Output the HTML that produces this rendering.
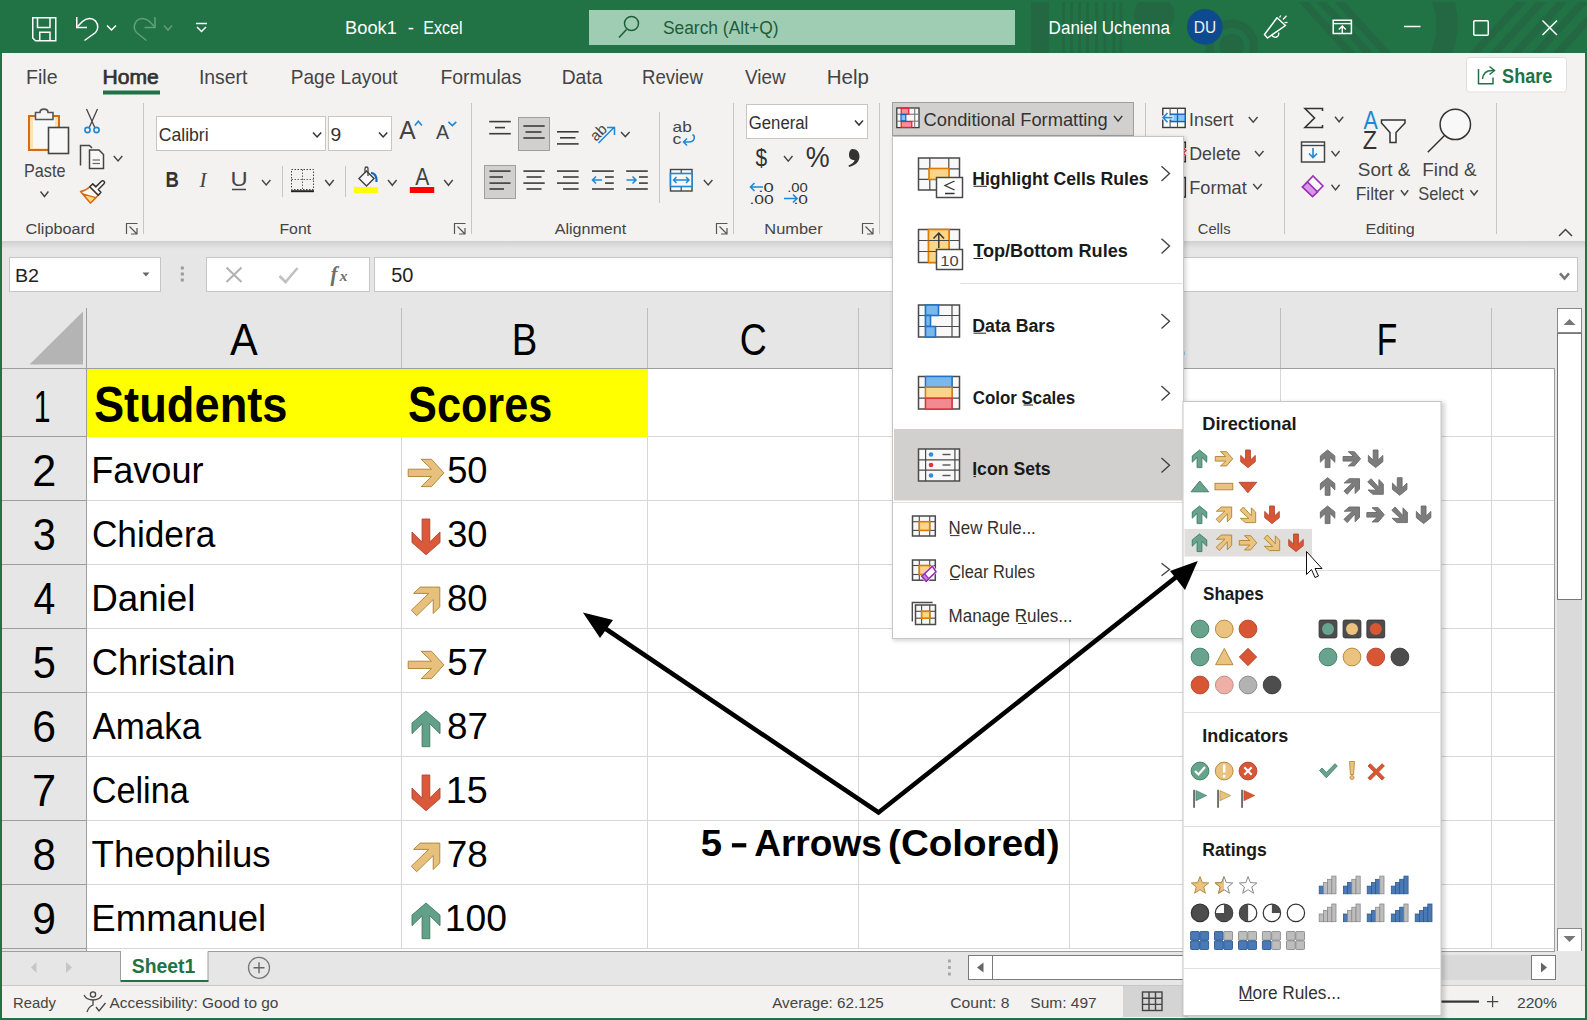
<!DOCTYPE html>
<html><head><meta charset="utf-8"><style>
html,body{margin:0;padding:0;width:1587px;height:1020px;overflow:hidden;background:#217346;}
svg{display:block;font-family:"Liberation Sans",sans-serif;}
</style></head><body>
<svg width="1587" height="1020" viewBox="0 0 1587 1020">
<rect x="0" y="0" width="1587" height="1020" fill="#217346" />
<g fill="#246843" stroke="none">
<rect x="1031" y="2" width="18" height="51"/>
<rect x="1062" y="2" width="2.8" height="51"/>
<rect x="1070" y="2" width="2.8" height="51"/>
<rect x="1078" y="2" width="2.8" height="51"/>
<rect x="1086" y="2" width="2.8" height="51"/>
<rect x="1095" y="2" width="2.8" height="51"/>
<rect x="1103.5" y="2" width="2.8" height="51"/>
<rect x="1112.5" y="2" width="2.8" height="51"/>
<rect x="1119.5" y="2" width="2.8" height="51"/>
<circle cx="1154.1" cy="15" r="20.3"/>
<circle cx="1231.7" cy="46" r="12.3"/>
</g>
<circle cx="1231.7" cy="46" r="22.3" fill="none" stroke="#246843" stroke-width="8.5"/>
<g stroke="#246843" stroke-width="7.5" fill="none">
<line x1="1300" y1="-2" x2="1352" y2="55"/>
<line x1="1318" y1="-2" x2="1370" y2="55"/>
<line x1="1336" y1="-2" x2="1388" y2="55"/>
<line x1="1473" y1="55" x2="1525" y2="-2"/>
<line x1="1493" y1="55" x2="1545" y2="-2"/>
<line x1="1514" y1="55" x2="1566" y2="-2"/>
<line x1="1535" y1="55" x2="1587" y2="-2"/>
<line x1="1556" y1="55" x2="1608" y2="-2"/>
</g>
<path d="M1432 2 C1438 18 1438 38 1430 53 H1452 C1459 38 1459 18 1455 2 Z" fill="#246843"/>
<rect x="0" y="0" width="1587" height="2" fill="#217346" />
<path d="M32.75 17.75 H55.75 V40.75 H35.5 L32.75 38 Z" fill="none" stroke="#ffffff" stroke-width="1.5" />
<path d="M37.5 17.75 V27.5 H50 V17.75" fill="none" stroke="#ffffff" stroke-width="1.5" />
<path d="M39.75 40.75 V32.25 H50 V40.75" fill="none" stroke="#ffffff" stroke-width="1.5" />
<path d="M76.75 17 V27.5 H87" fill="none" stroke="#ffffff" stroke-width="1.5" />
<path d="M77.5 26.5 L82.5 21.5 C86.5 17.5 92.5 17.5 95.5 21 C98.5 24.5 98.5 29.5 95.5 32.5 L84.5 40.5" fill="none" stroke="#ffffff" stroke-width="1.5" />
<path d="M107 25.5 L111.5 30 L116 25.5" fill="none" stroke="#ffffff" stroke-width="1.5" />
<path d="M155 17 V27.5 H144.5" fill="none" stroke="#62a07c" stroke-width="1.5" />
<path d="M154.5 26.5 L149.5 21.5 C145.5 17.5 139.5 17.5 136.5 21 C133.5 24.5 133.5 29.5 136.5 32.5 L146.5 40.5" fill="none" stroke="#62a07c" stroke-width="1.5" />
<path d="M164 25.5 L168.0 30 L172 25.5" fill="none" stroke="#62a07c" stroke-width="1.5" />
<line x1="196" y1="23.5" x2="207" y2="23.5" stroke="#ffffff" stroke-width="1.5" />
<path d="M197 27 L201.5 31.5 L206 27" fill="none" stroke="#ffffff" stroke-width="1.5" />
<text transform="translate(345.10,33.90) scale(0.9820,1)" font-size="18.60" font-weight="normal" fill="#ffffff" >Book1</text>
<text transform="translate(407.68,33.90) scale(0.9910,1)" font-size="18.60" font-weight="normal" fill="#ffffff" >-</text>
<text transform="translate(423.18,33.90) scale(0.8639,1)" font-size="18.60" font-weight="normal" fill="#ffffff" >Excel</text>
<rect x="589" y="10" width="426" height="35" fill="#9fcdb3" />
<circle cx="631.5" cy="23.5" r="7" fill="none" stroke="#1e5c3a" stroke-width="1.5"/>
<line x1="619" y1="37.5" x2="626.5" y2="29.5" stroke="#1e5c3a" stroke-width="1.5" />
<text transform="translate(662.91,33.90) scale(0.9364,1)" font-size="18.60" font-weight="normal" fill="#1e5c3a" >Search (Alt+Q)</text>
<text transform="translate(1048.60,33.90) scale(0.9172,1)" font-size="18.60" font-weight="normal" fill="#ffffff" >Daniel Uchenna</text>
<circle cx="1204.8" cy="26.8" r="17.9" fill="#0e4b8e"/>
<text transform="translate(1193.83,33.00) scale(0.9678,1)" font-size="16.00" font-weight="normal" fill="#f0f0f0" >DU</text>
<path d="M1264.5 34.5 L1277 17.8 L1285.5 25.5 L1267.5 38 Z" fill="none" stroke="#ffffff" stroke-width="1.5" stroke-linejoin="round"/>
<path d="M1272 35 A3.3 3.3 0 0 0 1278.5 32.5" fill="none" stroke="#ffffff" stroke-width="1.4" />
<line x1="1279.5" y1="17.5" x2="1280.8" y2="15.5" stroke="#ffffff" stroke-width="1.3" />
<line x1="1283" y1="19.5" x2="1286.5" y2="15.8" stroke="#ffffff" stroke-width="1.3" />
<line x1="1284.5" y1="22.5" x2="1287.5" y2="22.5" stroke="#ffffff" stroke-width="1.3" />
<path d="M1333.2 20.2 H1351.4 V33.6 H1333.2 Z" fill="none" stroke="#ffffff" stroke-width="1.5" />
<line x1="1333.2" y1="23.6" x2="1351.4" y2="23.6" stroke="#ffffff" stroke-width="1.4" />
<path d="M1338.8 29.5 L1342.3 26 L1345.8 29.5 M1342.3 26.5 V33.6" fill="none" stroke="#ffffff" stroke-width="1.4" />
<line x1="1404" y1="26.5" x2="1420.5" y2="26.5" stroke="#ffffff" stroke-width="1.5" />
<rect x="1473.75" y="20.75" width="14.5" height="14.5" fill="none" stroke="#fff" stroke-width="1.5" rx="1"/>
<line x1="1542.5" y1="20.5" x2="1557" y2="35" stroke="#ffffff" stroke-width="1.5" />
<line x1="1557" y1="20.5" x2="1542.5" y2="35" stroke="#ffffff" stroke-width="1.5" />
<rect x="2" y="53" width="1583" height="188" fill="#f3f2f1" />
<text transform="translate(26.10,84.00) scale(0.9527,1)" font-size="20.50" font-weight="normal" fill="#444444" >File</text>
<text transform="translate(102.57,84.00) scale(1.0290,1)" font-size="20.50" font-weight="normal" fill="#323130" stroke="#323130" stroke-width="0.7">Home</text>
<rect x="103" y="90.5" width="57" height="4" fill="#217346" />
<text transform="translate(198.91,84.00) scale(0.9466,1)" font-size="20.50" font-weight="normal" fill="#444444" >Insert</text>
<text transform="translate(290.84,84.00) scale(0.9286,1)" font-size="20.50" font-weight="normal" fill="#444444" >Page Layout</text>
<text transform="translate(440.41,84.00) scale(0.9481,1)" font-size="20.50" font-weight="normal" fill="#444444" >Formulas</text>
<text transform="translate(561.72,84.00) scale(0.9394,1)" font-size="20.50" font-weight="normal" fill="#444444" >Data</text>
<text transform="translate(641.98,84.00) scale(0.9057,1)" font-size="20.50" font-weight="normal" fill="#444444" >Review</text>
<text transform="translate(745.12,84.00) scale(0.9191,1)" font-size="20.50" font-weight="normal" fill="#444444" >View</text>
<text transform="translate(826.71,84.00) scale(1.0021,1)" font-size="20.50" font-weight="normal" fill="#444444" >Help</text>
<rect x="1466.5" y="57.5" width="100" height="34.5" fill="#ffffff" stroke="#e1dfdd" stroke-width="1" rx="3"/>
<path d="M1478.5 69 V83.8 H1493 V77.5" fill="none" stroke="#217346" stroke-width="1.5" />
<path d="M1482.5 79 C1483 73.5 1486 70.5 1492 70.5 H1494" fill="none" stroke="#217346" stroke-width="1.5" />
<path d="M1489.5 66.5 L1494.5 70.5 L1489.5 74.5" fill="none" stroke="#217346" stroke-width="1.5" />
<text transform="translate(1502.08,82.80) scale(0.9038,1)" font-size="20.00" font-weight="bold" fill="#217346" >Share</text>
<line x1="143.5" y1="103" x2="143.5" y2="234" stroke="#c8c6c4" stroke-width="1" />
<line x1="471.5" y1="103" x2="471.5" y2="234" stroke="#c8c6c4" stroke-width="1" />
<line x1="733.5" y1="103" x2="733.5" y2="234" stroke="#c8c6c4" stroke-width="1" />
<line x1="879.5" y1="103" x2="879.5" y2="234" stroke="#c8c6c4" stroke-width="1" />
<line x1="1145.5" y1="103" x2="1145.5" y2="234" stroke="#c8c6c4" stroke-width="1" />
<line x1="1284.5" y1="103" x2="1284.5" y2="234" stroke="#c8c6c4" stroke-width="1" />
<line x1="1496.5" y1="103" x2="1496.5" y2="234" stroke="#c8c6c4" stroke-width="1" />
<text transform="translate(25.48,234.20) scale(1.0820,1)" font-size="15.00" font-weight="normal" fill="#444444" >Clipboard</text>
<text transform="translate(279.40,234.20) scale(1.0567,1)" font-size="15.00" font-weight="normal" fill="#444444" >Font</text>
<text transform="translate(554.67,234.20) scale(1.0742,1)" font-size="15.00" font-weight="normal" fill="#444444" >Alignment</text>
<text transform="translate(764.35,234.20) scale(1.0931,1)" font-size="15.00" font-weight="normal" fill="#444444" >Number</text>
<text transform="translate(1197.75,234.20) scale(0.9833,1)" font-size="15.00" font-weight="normal" fill="#444444" >Cells</text>
<text transform="translate(1365.48,234.20) scale(1.0763,1)" font-size="15.00" font-weight="normal" fill="#444444" >Editing</text>
<path d="M126.5 234 V223.5 H137.5" fill="none" stroke="#555" stroke-width="1.2" />
<path d="M129.5 226.5 L137 234 M137 228 V234 H131" fill="none" stroke="#555" stroke-width="1.2" />
<path d="M454.5 234 V223.5 H465.5" fill="none" stroke="#555" stroke-width="1.2" />
<path d="M457.5 226.5 L465 234 M465 228 V234 H459" fill="none" stroke="#555" stroke-width="1.2" />
<path d="M716.5 234 V223.5 H727.5" fill="none" stroke="#555" stroke-width="1.2" />
<path d="M719.5 226.5 L727 234 M727 228 V234 H721" fill="none" stroke="#555" stroke-width="1.2" />
<path d="M862.5 234 V223.5 H873.5" fill="none" stroke="#555" stroke-width="1.2" />
<path d="M865.5 226.5 L873 234 M873 228 V234 H867" fill="none" stroke="#555" stroke-width="1.2" />
<path d="M1559 236 L1565.5 229.5 L1572 236" fill="none" stroke="#444" stroke-width="1.5" />
<defs><linearGradient id="rsh" x1="0" y1="0" x2="0" y2="1"><stop offset="0" stop-color="#cfcfcf"/><stop offset="1" stop-color="#e6e6e6"/></linearGradient></defs>
<rect x="2" y="241" width="1583" height="8" fill="url(#rsh)" />
<rect x="29" y="116" width="30" height="34" fill="#fbe4b1" stroke="#d86b10" stroke-width="2"/>
<rect x="33" y="118" width="22" height="30" fill="#f8f8f8" />
<path d="M35.5 119.5 V112.5 H40 C40 108 48 108 48 112.5 H53 V119.5 Z" fill="#f5f5f5" stroke="#555" stroke-width="1.6" />
<rect x="48.5" y="127.5" width="20" height="26" fill="#f8f8f8" stroke="#444" stroke-width="1.6"/>
<text transform="translate(23.97,176.80) scale(0.9263,1)" font-size="17.50" font-weight="normal" fill="#444444" >Paste</text>
<path d="M40.5 191.5 L44.45 196.5 L48.4 191.5" fill="none" stroke="#444" stroke-width="1.4" />
<path d="M86.5 109 L95 128 M97.5 109 L89 128" fill="none" stroke="#444" stroke-width="1.3" />
<circle cx="87.5" cy="130" r="2.6" fill="none" stroke="#1e88d6" stroke-width="1.6"/>
<circle cx="96.5" cy="130" r="2.6" fill="none" stroke="#1e88d6" stroke-width="1.6"/>
<path d="M80.5 165.5 V145.5 H89.5 L92 148" fill="none" stroke="#444" stroke-width="1.5" />
<path d="M89.5 168.5 V150 H99 L103.5 154.5 V168.5 Z" fill="#f8f8f8" stroke="#444" stroke-width="1.5" />
<line x1="92.5" y1="160" x2="100" y2="160" stroke="#666" stroke-width="1.2" />
<line x1="92.5" y1="163.5" x2="100" y2="163.5" stroke="#666" stroke-width="1.2" />
<path d="M113.8 156 L118.05 161 L122.3 156" fill="none" stroke="#444" stroke-width="1.4" />
<path d="M98.3 195.2 L89.8 186.7 C87 189.5 84 191 80.6 191.5 L90.5 202.9 Z" fill="#fafafa" stroke="#d86b10" stroke-width="1.6" stroke-linejoin="round"/>
<path d="M82.6 193.8 L95.7 197.7 L90.5 202.9 Z" fill="#f9d98a" stroke="#d86b10" stroke-width="1.3" stroke-linejoin="round"/>
<path d="M89.8 186.7 L92.8 183.9 L95.8 186.9 L101.4 181.3 C102.2 180.5 103.2 180.5 104 181.3 C104.8 182.1 104.8 183 104 183.8 L98.3 189.5 L100.9 192.2 L98.3 195.2 Z" fill="#fafafa" stroke="#333" stroke-width="1.5" stroke-linejoin="round"/>
<rect x="156.5" y="116.5" width="169" height="34" fill="#fff" stroke="#c8c6c4" stroke-width="1"/>
<text transform="translate(158.70,141.20) scale(0.9482,1)" font-size="18.60" font-weight="normal" fill="#323130" >Calibri</text>
<path d="M313 132.5 L317.1 137 L321.2 132.5" fill="none" stroke="#333" stroke-width="1.5" />
<rect x="328.5" y="116.5" width="63" height="34" fill="#fff" stroke="#c8c6c4" stroke-width="1"/>
<text transform="translate(330.60,141.20) scale(1.0359,1)" font-size="18.60" font-weight="normal" fill="#323130" >9</text>
<path d="M379 132.5 L383.15 137 L387.3 132.5" fill="none" stroke="#333" stroke-width="1.5" />
<text transform="translate(399.35,139.00) scale(0.9207,1)" font-size="26.70" font-weight="normal" fill="#444" >A</text>
<path d="M414.8 125.6 L418.35 121.3 L421.9 125.6" fill="none" stroke="#1e88d6" stroke-width="1.6" />
<text transform="translate(435.96,139.00) scale(0.9658,1)" font-size="20.30" font-weight="normal" fill="#444" >A</text>
<path d="M448.4 121.8 L452.35 125.6 L456.3 121.8" fill="none" stroke="#1e88d6" stroke-width="1.6" />
<text transform="translate(165.46,186.60) scale(0.8539,1)" font-size="21.70" font-weight="bold" fill="#333" >B</text>
<text transform="translate(199.5,186.6)" font-size="21" font-style="italic" fill="#444" font-family="Liberation Serif">I</text>
<text transform="translate(230.47,186.00) scale(1.1597,1)" font-size="20.50" font-weight="normal" fill="#444" >U</text>
<line x1="232" y1="189.5" x2="246" y2="189.5" stroke="#444" stroke-width="1.5" />
<path d="M262 180 L266.2 185 L270.4 180" fill="none" stroke="#444" stroke-width="1.4" />
<line x1="282.5" y1="166" x2="282.5" y2="197" stroke="#c8c6c4" stroke-width="1" />
<rect x="291.5" y="169.5" width="22" height="20" fill="none" stroke="#444" stroke-width="1" stroke-dasharray="1.5 1.5"/>
<path d="M302.5 169.5 V189.5 M291.5 179.5 H313.5" fill="none" stroke="#666" stroke-width="1" stroke-dasharray="1.5 1.5"/>
<line x1="291" y1="191.2" x2="314" y2="191.2" stroke="#222" stroke-width="2" />
<path d="M325.2 180 L329.45 185.3 L333.7 180" fill="none" stroke="#444" stroke-width="1.4" />
<line x1="345.5" y1="166" x2="345.5" y2="197" stroke="#c8c6c4" stroke-width="1" />
<path d="M359 178.5 L366.5 171 L374 178.5 L366.5 186 Z" fill="#f8f8f8" stroke="#444" stroke-width="1.5" />
<path d="M365 173 V168.5 C365 166.5 368 166.5 368 168.5 V176" fill="none" stroke="#444" stroke-width="1.3" />
<path d="M371 173 C375 173 377 177 376.5 182" fill="none" stroke="#1565c0" stroke-width="2.2" />
<rect x="354" y="187" width="24" height="6" fill="#ffff00" />
<path d="M388 180 L392.3 185.3 L396.6 180" fill="none" stroke="#444" stroke-width="1.4" />
<text transform="translate(415.26,185.30) scale(0.9023,1)" font-size="23.40" font-weight="normal" fill="#444" >A</text>
<rect x="409.8" y="187" width="24.4" height="6" fill="#ff0000" />
<path d="M444.2 180 L448.45 185.3 L452.7 180" fill="none" stroke="#444" stroke-width="1.4" />
<line x1="489.2" y1="121.6" x2="510.8" y2="121.6" stroke="#3b3b3b" stroke-width="1.6" />
<line x1="495" y1="127.6" x2="505" y2="127.6" stroke="#3b3b3b" stroke-width="1.6" />
<line x1="489.2" y1="133.7" x2="510.8" y2="133.7" stroke="#3b3b3b" stroke-width="1.6" />
<rect x="518.5" y="117.5" width="31" height="33" fill="#d2d0ce" stroke="#a19f9d" stroke-width="1"/>
<line x1="523.4" y1="126" x2="544.7" y2="126" stroke="#3b3b3b" stroke-width="1.6" />
<line x1="525.5" y1="132" x2="541.5" y2="132" stroke="#3b3b3b" stroke-width="1.6" />
<line x1="523.4" y1="138" x2="544.7" y2="138" stroke="#3b3b3b" stroke-width="1.6" />
<line x1="557" y1="131.8" x2="578.6" y2="131.8" stroke="#3b3b3b" stroke-width="1.6" />
<line x1="560" y1="137.8" x2="575.5" y2="137.8" stroke="#3b3b3b" stroke-width="1.6" />
<line x1="557" y1="143.9" x2="578.6" y2="143.9" stroke="#3b3b3b" stroke-width="1.6" />
<text transform="translate(596,142) rotate(-45)" font-size="15" fill="#444">ab</text>
<path d="M598.5 143 L614.5 127 M607 127.5 H614.5 V135" fill="none" stroke="#1e88d6" stroke-width="1.5" />
<path d="M621 132 L625.3 136.6 L629.6 132" fill="none" stroke="#444" stroke-width="1.4" />
<line x1="659.5" y1="112" x2="659.5" y2="203" stroke="#c8c6c4" stroke-width="1" />
<text transform="translate(672.57,131.50) scale(1.2301,1)" font-size="14.00" font-weight="normal" fill="#444" >ab</text>
<text transform="translate(672.54,144.00) scale(1.2757,1)" font-size="14.00" font-weight="normal" fill="#444" >c</text>
<path d="M692.5 134.5 C695.5 136 695 142 689 142 H683.5 M687 138.5 L683.5 142 L687 145.5" fill="none" stroke="#1e88d6" stroke-width="1.5" />
<rect x="484.5" y="165.5" width="31" height="33" fill="#d2d0ce" stroke="#a19f9d" stroke-width="1"/>
<line x1="489.5" y1="171.1" x2="510.5" y2="171.1" stroke="#3b3b3b" stroke-width="1.6" />
<line x1="489.5" y1="177" x2="503" y2="177" stroke="#3b3b3b" stroke-width="1.6" />
<line x1="489.5" y1="183.1" x2="510.5" y2="183.1" stroke="#3b3b3b" stroke-width="1.6" />
<line x1="489.5" y1="189" x2="504" y2="189" stroke="#3b3b3b" stroke-width="1.6" />
<line x1="523.4" y1="171.1" x2="544.7" y2="171.1" stroke="#3b3b3b" stroke-width="1.6" />
<line x1="526.5" y1="177" x2="541.5" y2="177" stroke="#3b3b3b" stroke-width="1.6" />
<line x1="523.4" y1="183.1" x2="544.7" y2="183.1" stroke="#3b3b3b" stroke-width="1.6" />
<line x1="526.5" y1="189" x2="541.5" y2="189" stroke="#3b3b3b" stroke-width="1.6" />
<line x1="557" y1="171.1" x2="578.6" y2="171.1" stroke="#3b3b3b" stroke-width="1.6" />
<line x1="563" y1="177" x2="578.6" y2="177" stroke="#3b3b3b" stroke-width="1.6" />
<line x1="557" y1="183.1" x2="578.6" y2="183.1" stroke="#3b3b3b" stroke-width="1.6" />
<line x1="563" y1="189" x2="578.6" y2="189" stroke="#3b3b3b" stroke-width="1.6" />
<line x1="592" y1="171.1" x2="613.8" y2="171.1" stroke="#3b3b3b" stroke-width="1.6" />
<line x1="605" y1="177" x2="613.8" y2="177" stroke="#3b3b3b" stroke-width="1.6" />
<line x1="605" y1="183.1" x2="613.8" y2="183.1" stroke="#3b3b3b" stroke-width="1.6" />
<line x1="592" y1="189" x2="613.8" y2="189" stroke="#3b3b3b" stroke-width="1.6" />
<path d="M592.5 180 H602 M596 176.5 L592.5 180 L596 183.5" fill="none" stroke="#1e88d6" stroke-width="1.5" />
<line x1="626.2" y1="171.1" x2="647.8" y2="171.1" stroke="#3b3b3b" stroke-width="1.6" />
<line x1="639" y1="177" x2="647.8" y2="177" stroke="#3b3b3b" stroke-width="1.6" />
<line x1="639" y1="183.1" x2="647.8" y2="183.1" stroke="#3b3b3b" stroke-width="1.6" />
<line x1="626.2" y1="189" x2="647.8" y2="189" stroke="#3b3b3b" stroke-width="1.6" />
<path d="M626.5 180 H636 M632.5 176.5 L636 180 L632.5 183.5" fill="none" stroke="#1e88d6" stroke-width="1.5" />
<rect x="670.5" y="169.5" width="21.5" height="21.5" fill="#f8f8f8" stroke="#444" stroke-width="1.4"/>
<line x1="681.2" y1="169.5" x2="681.2" y2="191" stroke="#444" stroke-width="1.2" />
<rect x="670.5" y="173.5" width="21.5" height="13" fill="#f8f8f8" stroke="#1e88d6" stroke-width="1.6"/>
<path d="M673.5 180 H689 M676.5 177 L673.5 180 L676.5 183 M686 177 L689 180 L686 183" fill="none" stroke="#1e88d6" stroke-width="1.5" />
<path d="M703.9 180 L708.15 185 L712.4 180" fill="none" stroke="#444" stroke-width="1.4" />
<rect x="746.5" y="104.5" width="121" height="34" fill="#fff" stroke="#c8c6c4" stroke-width="1"/>
<text transform="translate(748.76,128.80) scale(0.9001,1)" font-size="18.60" font-weight="normal" fill="#323130" >General</text>
<path d="M855 120.5 L859.0 125 L863 120.5" fill="none" stroke="#333" stroke-width="1.5" />
<text transform="translate(755.47,165.50) scale(0.8738,1)" font-size="24.00" font-weight="normal" fill="#333" >$</text>
<path d="M784 156 L788.25 161.2 L792.5 156" fill="none" stroke="#444" stroke-width="1.4" />
<text transform="translate(805.84,167.40) scale(0.9276,1)" font-size="29.00" font-weight="normal" fill="#333" >%</text>
<path d="M852.5 149 C857 149 859.5 152 859.5 156.5 C859.5 161 856 165.5 849 167 L848.5 165.5 C852 164 854.5 162 854.5 160 C851 160 849 158 849 155 C849 151 851 149 852.5 149 Z" fill="#333" stroke="none" stroke-width="1" />
<text transform="translate(758.31,191.50) scale(1.4212,1)" font-size="13.00" font-weight="normal" fill="#333" >.0</text>
<text transform="translate(749.41,203.50) scale(1.3434,1)" font-size="13.00" font-weight="normal" fill="#333" >.00</text>
<path d="M750.5 187 H763 M754.5 183 L750.5 187 L754.5 191" fill="none" stroke="#1e88d6" stroke-width="1.6" />
<text transform="translate(787.14,191.50) scale(1.1418,1)" font-size="13.00" font-weight="normal" fill="#333" >.00</text>
<text transform="translate(793.42,203.50) scale(1.3338,1)" font-size="13.00" font-weight="normal" fill="#333" >.0</text>
<path d="M784 198.5 H797 M793 194.5 L797 198.5 L793 202.5" fill="none" stroke="#1e88d6" stroke-width="1.6" />
<rect x="892.5" y="102.5" width="241" height="33" fill="#d2d0ce" stroke="#a19f9d" stroke-width="1"/>
<rect x="896.8" y="108" width="22.2" height="19.6" fill="#fafafa" stroke="#3a3a3a" stroke-width="1.3"/>
<line x1="914.7" y1="108" x2="914.7" y2="127.6" stroke="#777" stroke-width="1.1" />
<line x1="896.8" y1="114.2" x2="919" y2="114.2" stroke="#777" stroke-width="1.1" />
<line x1="896.8" y1="121.2" x2="919" y2="121.2" stroke="#777" stroke-width="1.1" />
<rect x="901.2" y="108.3" width="7.6" height="5.8" fill="#ff909a" stroke="#e5202a" stroke-width="1.2"/>
<rect x="901" y="114.6" width="4.8" height="6.2" fill="#8cc4f0" stroke="#0a66c0" stroke-width="1.2"/>
<rect x="901.2" y="121.6" width="10.6" height="5.8" fill="#ff909a" stroke="#e5202a" stroke-width="1.2"/>
<text transform="translate(923.57,125.90) scale(0.9688,1)" font-size="18.90" font-weight="normal" fill="#333" >Conditional Formatting</text>
<path d="M1114 115.8 L1118.1 121.2 L1122.2 115.8" fill="none" stroke="#333" stroke-width="1.4" />
<rect x="1162.8" y="108.3" width="22.4" height="19.2" fill="#fafafa" stroke="#3a3a3a" stroke-width="1.4"/>
<line x1="1170.1" y1="108.3" x2="1170.1" y2="127.5" stroke="#555" stroke-width="1.1" />
<line x1="1177.5" y1="108.3" x2="1177.5" y2="127.5" stroke="#555" stroke-width="1.1" />
<rect x="1170.6" y="114.2" width="14.6" height="7.4" fill="#8cc4f0" stroke="#0a66c0" stroke-width="1.4"/>
<line x1="1177.5" y1="114.2" x2="1177.5" y2="121.6" stroke="#0a66c0" stroke-width="1.3" />
<path d="M1161 117.6 L1168 111.5 V124 Z" fill="#f3f2f1" stroke="none" stroke-width="1" />
<rect x="1162" y="115.5" width="11.5" height="4" fill="#fafafa" />
<path d="M1172.5 117.6 H1163 M1167.5 113 L1163 117.6 L1167.5 122.2" fill="none" stroke="#1e8ad6" stroke-width="1.6" />
<text transform="translate(1189.06,125.90) scale(0.9717,1)" font-size="18.30" font-weight="normal" fill="#444" >Insert</text>
<path d="M1248.8 117 L1253.1999999999998 122.2 L1257.6 117" fill="none" stroke="#444" stroke-width="1.4" />
<path d="M1183 142.2 H1185.3 V148 M1185.3 156 V161.8 H1183" fill="none" stroke="#333" stroke-width="1.5" />
<path d="M1183.5 148 L1186 150.5 L1183.5 153 M1183.5 153.5 L1186 156" fill="none" stroke="#e5303c" stroke-width="1.3" />
<path d="M1183 177.5 H1185.3 V197 H1183" fill="none" stroke="#333" stroke-width="1.5" />
<text transform="translate(1189.24,159.70) scale(0.9746,1)" font-size="18.30" font-weight="normal" fill="#444" >Delete</text>
<path d="M1255 151 L1259.25 156 L1263.5 151" fill="none" stroke="#444" stroke-width="1.4" />
<text transform="translate(1189.21,193.80) scale(0.9925,1)" font-size="18.30" font-weight="normal" fill="#444" >Format</text>
<path d="M1253.2 184 L1257.5 189 L1261.8 184" fill="none" stroke="#444" stroke-width="1.4" />
<path d="M1322.5 111 V108.5 H1305 L1314.5 118 L1305 127.5 H1322.5 V125" fill="none" stroke="#333" stroke-width="1.6" />
<path d="M1335 116.8 L1339.1 121.8 L1343.2 116.8" fill="none" stroke="#444" stroke-width="1.4" />
<rect x="1301.5" y="142" width="23" height="20" fill="#f8f8f8" stroke="#444" stroke-width="1.5"/>
<line x1="1301.5" y1="145.5" x2="1324.5" y2="145.5" stroke="#444" stroke-width="1.4" />
<path d="M1313 148 V157.5 M1309 153.5 L1313 157.5 L1317 153.5" fill="none" stroke="#1e88d6" stroke-width="1.6" />
<path d="M1331.5 151 L1335.55 156 L1339.6 151" fill="none" stroke="#444" stroke-width="1.4" />
<path d="M1302.5 187 L1313 176 L1323 186 L1312.5 196.5 Z" fill="#f8f8f8" stroke="#9b30b8" stroke-width="1.6" />
<path d="M1302.5 187 L1307.5 182 L1317.5 192 L1312.5 196.5 Z" fill="#d896e6" stroke="#9b30b8" stroke-width="1.6" />
<path d="M1331.5 184.7 L1335.55 189.9 L1339.6 184.7" fill="none" stroke="#444" stroke-width="1.4" />
<text transform="translate(1363.46,128.50) scale(0.8295,1)" font-size="26.00" font-weight="normal" fill="#1e88d6" >A</text>
<text transform="translate(1362.76,149.40) scale(0.9346,1)" font-size="25.00" font-weight="normal" fill="#333" >Z</text>
<path d="M1381.5 120 H1405 V123 L1396 132.5 V142.5 H1390 V132.5 L1381.5 123 Z" fill="#f8f8f8" stroke="#333" stroke-width="1.5" />
<text transform="translate(1357.84,175.60) scale(1.0625,1)" font-size="17.80" font-weight="normal" fill="#444" >Sort &amp;</text>
<text transform="translate(1355.78,199.70) scale(0.9736,1)" font-size="17.80" font-weight="normal" fill="#444" >Filter</text>
<path d="M1400.9 190.3 L1404.5500000000002 195 L1408.2 190.3" fill="none" stroke="#444" stroke-width="1.4" />
<circle cx="1455.3" cy="124.4" r="15.2" fill="#f8f8f8" stroke="#333" stroke-width="1.5"/>
<line x1="1444.5" y1="135.5" x2="1427.8" y2="152.2" stroke="#333" stroke-width="1.5" />
<text transform="translate(1422.26,175.60) scale(1.0562,1)" font-size="17.80" font-weight="normal" fill="#444" >Find &amp;</text>
<text transform="translate(1418.25,199.70) scale(0.9231,1)" font-size="17.80" font-weight="normal" fill="#444" >Select</text>
<path d="M1470.4 190.3 L1474.1 195 L1477.8 190.3" fill="none" stroke="#444" stroke-width="1.4" />
<rect x="2" y="249" width="1583" height="59" fill="#e6e6e6" />
<rect x="9.5" y="257.5" width="151" height="34" fill="#fff" stroke="#c6c6c6" stroke-width="1"/>
<text transform="translate(14.88,282.30) scale(1.1263,1)" font-size="17.50" font-weight="normal" fill="#222" >B2</text>
<path d="M142.5 272.5 H149.5 L146 276.5 Z" fill="#666" stroke="none" stroke-width="1" />
<rect x="180.8" y="266.5" width="3" height="3" fill="#9a9a9a" />
<rect x="180.8" y="272.5" width="3" height="3" fill="#9a9a9a" />
<rect x="180.8" y="278.5" width="3" height="3" fill="#9a9a9a" />
<rect x="206.5" y="257.5" width="163" height="34" fill="#fff" stroke="#c6c6c6" stroke-width="1"/>
<path d="M226.5 267.5 L241.5 282 M241.5 267.5 L226.5 282" fill="none" stroke="#b3b3b3" stroke-width="2.2" />
<path d="M279.5 276 L285.5 282 L297.5 268" fill="none" stroke="#c0c0c0" stroke-width="2.6" />
<text transform="translate(330.5,281)" font-size="21" font-style="italic" font-weight="bold" fill="#6e6e6e" font-family="Liberation Serif">f</text>
<text transform="translate(339.8,281)" font-size="15.5" font-style="italic" font-weight="bold" fill="#6e6e6e" font-family="Liberation Serif">x</text>
<rect x="374.5" y="257.5" width="1203" height="34" fill="#fff" stroke="#c6c6c6" stroke-width="1"/>
<text transform="translate(391.20,282.30) scale(0.9726,1)" font-size="20.50" font-weight="normal" fill="#222" >50</text>
<path d="M1560 273.3 L1564.5 278.5 L1569 273.3" fill="none" stroke="#777" stroke-width="2.6" />
<rect x="2" y="308" width="1553" height="60" fill="#e6e6e6" />
<path d="M29.5 364.5 L83 311.5 V364.5 Z" fill="#b4b4b4" stroke="none" stroke-width="1" />
<line x1="86.5" y1="308" x2="86.5" y2="368" stroke="#9e9e9e" stroke-width="1" />
<line x1="401.5" y1="308" x2="401.5" y2="368" stroke="#bdbdbd" stroke-width="1" />
<line x1="647.5" y1="308" x2="647.5" y2="368" stroke="#bdbdbd" stroke-width="1" />
<line x1="858.5" y1="308" x2="858.5" y2="368" stroke="#bdbdbd" stroke-width="1" />
<line x1="1069.5" y1="308" x2="1069.5" y2="368" stroke="#bdbdbd" stroke-width="1" />
<line x1="1280.5" y1="308" x2="1280.5" y2="368" stroke="#bdbdbd" stroke-width="1" />
<line x1="1491.5" y1="308" x2="1491.5" y2="368" stroke="#bdbdbd" stroke-width="1" />
<line x1="2" y1="368.5" x2="1554" y2="368.5" stroke="#9e9e9e" stroke-width="1" />
<text transform="translate(230.12,355.20) scale(0.9250,1)" font-size="45.00" font-weight="normal" fill="#000" >A</text>
<text transform="translate(511.86,355.20) scale(0.8518,1)" font-size="45.00" font-weight="normal" fill="#000" >B</text>
<text transform="translate(739.80,355.20) scale(0.8316,1)" font-size="45.00" font-weight="normal" fill="#000" >C</text>
<text transform="translate(949.68,355.20) scale(0.9005,1)" font-size="45.00" font-weight="normal" fill="#000" >D</text>
<text transform="translate(1160.97,355.20) scale(0.8200,1)" font-size="45.00" font-weight="normal" fill="#000" >E</text>
<text transform="translate(1376.85,355.20) scale(0.7456,1)" font-size="45.00" font-weight="normal" fill="#000" >F</text>
<rect x="87" y="369" width="1467" height="582" fill="#ffffff" />
<rect x="2" y="369" width="84.5" height="582" fill="#e6e6e6" />
<line x1="2" y1="436.5" x2="86.5" y2="436.5" stroke="#9e9e9e" stroke-width="1" />
<line x1="87" y1="436.5" x2="1554" y2="436.5" stroke="#d6d6d6" stroke-width="1" />
<line x1="2" y1="500.5" x2="86.5" y2="500.5" stroke="#9e9e9e" stroke-width="1" />
<line x1="87" y1="500.5" x2="1554" y2="500.5" stroke="#d6d6d6" stroke-width="1" />
<line x1="2" y1="564.5" x2="86.5" y2="564.5" stroke="#9e9e9e" stroke-width="1" />
<line x1="87" y1="564.5" x2="1554" y2="564.5" stroke="#d6d6d6" stroke-width="1" />
<line x1="2" y1="628.5" x2="86.5" y2="628.5" stroke="#9e9e9e" stroke-width="1" />
<line x1="87" y1="628.5" x2="1554" y2="628.5" stroke="#d6d6d6" stroke-width="1" />
<line x1="2" y1="692.5" x2="86.5" y2="692.5" stroke="#9e9e9e" stroke-width="1" />
<line x1="87" y1="692.5" x2="1554" y2="692.5" stroke="#d6d6d6" stroke-width="1" />
<line x1="2" y1="756.5" x2="86.5" y2="756.5" stroke="#9e9e9e" stroke-width="1" />
<line x1="87" y1="756.5" x2="1554" y2="756.5" stroke="#d6d6d6" stroke-width="1" />
<line x1="2" y1="820.5" x2="86.5" y2="820.5" stroke="#9e9e9e" stroke-width="1" />
<line x1="87" y1="820.5" x2="1554" y2="820.5" stroke="#d6d6d6" stroke-width="1" />
<line x1="2" y1="884.5" x2="86.5" y2="884.5" stroke="#9e9e9e" stroke-width="1" />
<line x1="87" y1="884.5" x2="1554" y2="884.5" stroke="#d6d6d6" stroke-width="1" />
<line x1="2" y1="948.5" x2="86.5" y2="948.5" stroke="#9e9e9e" stroke-width="1" />
<line x1="87" y1="948.5" x2="1554" y2="948.5" stroke="#d6d6d6" stroke-width="1" />
<line x1="401.5" y1="369" x2="401.5" y2="949" stroke="#d6d6d6" stroke-width="1" />
<line x1="647.5" y1="369" x2="647.5" y2="949" stroke="#d6d6d6" stroke-width="1" />
<line x1="858.5" y1="369" x2="858.5" y2="949" stroke="#d6d6d6" stroke-width="1" />
<line x1="1069.5" y1="369" x2="1069.5" y2="949" stroke="#d6d6d6" stroke-width="1" />
<line x1="1280.5" y1="369" x2="1280.5" y2="949" stroke="#d6d6d6" stroke-width="1" />
<line x1="1491.5" y1="369" x2="1491.5" y2="949" stroke="#d6d6d6" stroke-width="1" />
<line x1="86.5" y1="368" x2="86.5" y2="949" stroke="#9e9e9e" stroke-width="1" />
<rect x="87" y="369" width="561" height="68" fill="#ffff00" />
<line x1="1554.5" y1="368" x2="1554.5" y2="951" stroke="#9e9e9e" stroke-width="1" />
<text transform="translate(33.70,422.00) scale(0.6700,1)" font-size="45.00" font-weight="normal" fill="#000" >1</text>
<text transform="translate(32.13,486.00) scale(0.9610,1)" font-size="45.00" font-weight="normal" fill="#000" >2</text>
<text transform="translate(32.72,550.00) scale(0.9233,1)" font-size="45.00" font-weight="normal" fill="#000" >3</text>
<text transform="translate(33.40,614.00) scale(0.8688,1)" font-size="45.00" font-weight="normal" fill="#000" >4</text>
<text transform="translate(32.64,678.00) scale(0.9233,1)" font-size="45.00" font-weight="normal" fill="#000" >5</text>
<text transform="translate(32.13,742.00) scale(0.9488,1)" font-size="45.00" font-weight="normal" fill="#000" >6</text>
<text transform="translate(32.08,806.00) scale(0.9630,1)" font-size="45.00" font-weight="normal" fill="#000" >7</text>
<text transform="translate(32.48,870.00) scale(0.9330,1)" font-size="45.00" font-weight="normal" fill="#000" >8</text>
<text transform="translate(32.30,934.00) scale(0.9477,1)" font-size="45.00" font-weight="normal" fill="#000" >9</text>
<text transform="translate(93.90,422.40) scale(0.9146,1)" font-size="49.50" font-weight="bold" fill="#000" >Students</text>
<text transform="translate(408.05,422.40) scale(0.8735,1)" font-size="49.50" font-weight="bold" fill="#000" >Scores</text>
<text transform="translate(91.14,482.70) scale(0.9900,1)" font-size="36.50" font-weight="normal" fill="#000" >Favour</text>
<text transform="translate(447.15,482.70) scale(0.9944,1)" font-size="36.50" font-weight="normal" fill="#000" >50</text>
<path transform="translate(0,0)" d="M408.2,469.2 L431.5,469.2 L421.2,459.3 L431.5,459.3 L443.9,472.9 L431.5,486.6 L421.2,486.6 L431.5,476.5 L408.2,476.5 Z" fill="#e8c07e" stroke="#a8812c" stroke-width="0.9"/>
<text transform="translate(91.91,546.70) scale(0.9653,1)" font-size="36.50" font-weight="normal" fill="#000" >Chidera</text>
<text transform="translate(447.22,546.70) scale(0.9925,1)" font-size="36.50" font-weight="normal" fill="#000" >30</text>
<path transform="translate(0,0)" d="M422.1,519 L429.8,519 L429.8,542 L440,532 L440,542.6 L426,554.7 L412,542.6 L412,532 L422.1,542 Z" fill="#d9593a" stroke="#b0452a" stroke-width="0.9"/>
<text transform="translate(91.18,610.70) scale(1.0077,1)" font-size="36.50" font-weight="normal" fill="#000" >Daniel</text>
<text transform="translate(447.02,610.70) scale(0.9977,1)" font-size="36.50" font-weight="normal" fill="#000" >80</text>
<path transform="translate(0,0)" d="M413.5,593.4 L420.2,587.1 L439.8,587.1 L439.8,606.9 L433.2,613.5 L433.2,599.6 L416.7,615.7 L411.3,610.3 L428.7,593.4 Z" fill="#e8c07e" stroke="#a8812c" stroke-width="0.9"/>
<text transform="translate(91.75,674.70) scale(0.9986,1)" font-size="36.50" font-weight="normal" fill="#000" >Christain</text>
<text transform="translate(447.13,674.70) scale(1.0053,1)" font-size="36.50" font-weight="normal" fill="#000" >57</text>
<path transform="translate(0,192)" d="M408.2,469.2 L431.5,469.2 L421.2,459.3 L431.5,459.3 L443.9,472.9 L431.5,486.6 L421.2,486.6 L431.5,476.5 L408.2,476.5 Z" fill="#e8c07e" stroke="#a8812c" stroke-width="0.9"/>
<text transform="translate(92.53,738.70) scale(0.9557,1)" font-size="36.50" font-weight="normal" fill="#000" >Amaka</text>
<text transform="translate(447.00,738.70) scale(1.0087,1)" font-size="36.50" font-weight="normal" fill="#000" >87</text>
<path transform="translate(0,192)" d="M422.1,554.70 L429.8,554.70 L429.8,531.70 L440,541.70 L440,531.10 L426,519.00 L412,531.10 L412,541.70 L422.1,531.70 Z" fill="#62a08a" stroke="#3b7a62" stroke-width="0.9"/>
<text transform="translate(91.66,802.70) scale(0.9398,1)" font-size="36.50" font-weight="normal" fill="#000" >Celina</text>
<text transform="translate(445.73,802.70) scale(1.0335,1)" font-size="36.50" font-weight="normal" fill="#000" >15</text>
<path transform="translate(0,256)" d="M422.1,519 L429.8,519 L429.8,542 L440,532 L440,542.6 L426,554.7 L412,542.6 L412,532 L422.1,542 Z" fill="#d9593a" stroke="#b0452a" stroke-width="0.9"/>
<text transform="translate(91.58,866.70) scale(1.0033,1)" font-size="36.50" font-weight="normal" fill="#000" >Theophilus</text>
<text transform="translate(446.71,866.70) scale(1.0096,1)" font-size="36.50" font-weight="normal" fill="#000" >78</text>
<path transform="translate(0,256)" d="M413.5,593.4 L420.2,587.1 L439.8,587.1 L439.8,606.9 L433.2,613.5 L433.2,599.6 L416.7,615.7 L411.3,610.3 L428.7,593.4 Z" fill="#e8c07e" stroke="#a8812c" stroke-width="0.9"/>
<text transform="translate(91.30,930.70) scale(1.0028,1)" font-size="36.50" font-weight="normal" fill="#000" >Emmanuel</text>
<text transform="translate(444.76,930.70) scale(1.0213,1)" font-size="36.50" font-weight="normal" fill="#000" >100</text>
<path transform="translate(0,384)" d="M422.1,554.70 L429.8,554.70 L429.8,531.70 L440,541.70 L440,531.10 L426,519.00 L412,531.10 L412,541.70 L422.1,531.70 Z" fill="#62a08a" stroke="#3b7a62" stroke-width="0.9"/>
<rect x="1555" y="308" width="30" height="643" fill="#e6e6e6" />
<rect x="1557" y="308" width="25" height="643" fill="#dadada" />
<rect x="1557.5" y="308.5" width="24" height="24" fill="#fff" stroke="#8a8a8a" stroke-width="1"/>
<path d="M1563.5 325 L1569.5 319 L1575.5 325 Z" fill="#777" stroke="none" stroke-width="1" />
<rect x="1557.5" y="333.5" width="24" height="266" fill="#fff" stroke="#777" stroke-width="1"/>
<rect x="1557.5" y="928.5" width="24" height="23" fill="#fff" stroke="#8a8a8a" stroke-width="1"/>
<path d="M1563.5 936 L1569.5 942 L1575.5 936 Z" fill="#777" stroke="none" stroke-width="1" />
<rect x="2" y="951" width="1583" height="34" fill="#e6e6e6" />
<line x1="2" y1="951.5" x2="121" y2="951.5" stroke="#9e9e9e" stroke-width="1" />
<line x1="208" y1="951.5" x2="1555" y2="951.5" stroke="#9e9e9e" stroke-width="1" />
<path d="M36.5 962 L31 967.5 L36.5 973 Z" fill="#c6c6c6" stroke="none" stroke-width="1" />
<path d="M66 962 L72 967.5 L66 973 Z" fill="#c6c6c6" stroke="none" stroke-width="1" />
<rect x="121" y="951" width="87" height="29" fill="#fff" />
<path d="M120.5 951.5 V980.5 M208 951.5 V980.5" fill="none" stroke="#9e9e9e" stroke-width="1" />
<rect x="120.5" y="980" width="88" height="2" fill="#217346" />
<text transform="translate(131.74,973.00) scale(0.9879,1)" font-size="19.60" font-weight="bold" fill="#217346" >Sheet1</text>
<circle cx="259" cy="967.8" r="10.5" fill="none" stroke="#777" stroke-width="1.3"/>
<path d="M253.5 967.8 H264.5 M259 962.3 V973.3" fill="none" stroke="#666" stroke-width="1.4" />
<rect x="948" y="959.5" width="2.8" height="3" fill="#a6a6a6" />
<rect x="948" y="966.0" width="2.8" height="3" fill="#a6a6a6" />
<rect x="948" y="972.5" width="2.8" height="3" fill="#a6a6a6" />
<rect x="968" y="955" width="587" height="25" fill="#d9d9d9" />
<rect x="968.5" y="955.5" width="24" height="24" fill="#fff" stroke="#7a7a7a" stroke-width="1"/>
<path d="M983.5 962.5 L977 967.5 L983.5 972.5 Z" fill="#666" stroke="none" stroke-width="1" />
<rect x="992.5" y="955.5" width="200" height="24" fill="#fff" stroke="#7a7a7a" stroke-width="1"/>
<rect x="1531.5" y="955.5" width="24" height="24" fill="#fff" stroke="#7a7a7a" stroke-width="1"/>
<path d="M1541 962.5 L1547 967.5 L1541 972.5 Z" fill="#666" stroke="none" stroke-width="1" />
<rect x="2" y="985" width="1583" height="33" fill="#f3f2f1" />
<line x1="2" y1="985.5" x2="1585" y2="985.5" stroke="#c8c8c8" stroke-width="1" />
<text transform="translate(12.98,1007.70) scale(0.9563,1)" font-size="15.50" font-weight="normal" fill="#444" >Ready</text>
<circle cx="93" cy="994.5" r="2.6" fill="none" stroke="#444" stroke-width="1.3"/>
<path d="M84 995 C86 999 90 1000 93 1000 C96 1000 100 999 102 995 M93 1000 V1005 C90 1006 88 1009 87 1012 M96 1007 L99 1011 L105.5 1003" fill="none" stroke="#444" stroke-width="1.3" />
<text transform="translate(109.57,1007.70) scale(0.9956,1)" font-size="15.50" font-weight="normal" fill="#444" >Accessibility: Good to go</text>
<text transform="translate(772.17,1007.70) scale(0.9826,1)" font-size="15.50" font-weight="normal" fill="#444" >Average: 62.125</text>
<text transform="translate(950.20,1007.70) scale(1.0117,1)" font-size="15.50" font-weight="normal" fill="#444" >Count: 8</text>
<text transform="translate(1030.29,1007.70) scale(1.0021,1)" font-size="15.50" font-weight="normal" fill="#444" >Sum: 497</text>
<rect x="1123" y="986" width="65" height="31" fill="#d4d4d4" />
<g fill="none" stroke="#444" stroke-width="1.4"><rect x="1142.5" y="992" width="19.5" height="18.5"/><path d="M1149 992 V1010.5 M1155.5 992 V1010.5 M1142.5 998.2 H1162 M1142.5 1004.4 H1162"/></g>
<rect x="1440" y="1000.5" width="39" height="2.2" fill="#333" />
<path d="M1487 1001.6 H1498.3 M1492.6 996 V1007.3" fill="none" stroke="#444" stroke-width="1.2" />
<text transform="translate(1516.91,1007.70) scale(1.0128,1)" font-size="15.50" font-weight="normal" fill="#444" >220%</text>
<defs><filter id="msh" x="-10%" y="-10%" width="120%" height="120%"><feGaussianBlur stdDeviation="2.2"/></filter></defs>
<rect x="893" y="137" width="293" height="504" fill="#000" opacity="0.16" filter="url(#msh)"/>
<rect x="892.5" y="136.5" width="291" height="502" fill="#ffffff" stroke="#c8c6c4" stroke-width="1"/>
<text transform="translate(972.22,184.90) scale(0.9592,1)" font-size="18.40" font-weight="bold" fill="#1a1a1a" >Highlight Cells Rules</text>
<line x1="973.5" y1="186.3" x2="987" y2="186.3" stroke="#222" stroke-width="1" />
<text transform="translate(973.20,257.00) scale(0.9856,1)" font-size="18.40" font-weight="bold" fill="#1a1a1a" >Top/Bottom Rules</text>
<line x1="973.5" y1="258.5" x2="983" y2="258.5" stroke="#222" stroke-width="1" />
<text transform="translate(972.21,331.80) scale(0.9664,1)" font-size="18.40" font-weight="bold" fill="#1a1a1a" >Data Bars</text>
<line x1="973.5" y1="333.2" x2="986" y2="333.2" stroke="#222" stroke-width="1" />
<text transform="translate(972.71,403.60) scale(0.9194,1)" font-size="18.40" font-weight="bold" fill="#1a1a1a" >Color Scales</text>
<line x1="1023.5" y1="405" x2="1033" y2="405" stroke="#222" stroke-width="1" />
<line x1="960.5" y1="283.5" x2="1182" y2="283.5" stroke="#e1dfdd" stroke-width="1" />
<rect x="894" y="429" width="288.5" height="71.5" fill="#d2d0ce" />
<text transform="translate(972.22,475.20) scale(0.9597,1)" font-size="18.40" font-weight="bold" fill="#1a1a1a" >Icon Sets</text>
<line x1="973.5" y1="476.6" x2="976" y2="476.6" stroke="#222" stroke-width="1" />
<line x1="893" y1="502.5" x2="1183" y2="502.5" stroke="#e1dfdd" stroke-width="1" />
<path d="M1161.5 166.3 L1169.5 173.60000000000002 L1161.5 180.9" fill="none" stroke="#444" stroke-width="1.4" />
<path d="M1161.5 238.8 L1169.5 246.10000000000002 L1161.5 253.4" fill="none" stroke="#444" stroke-width="1.4" />
<path d="M1161.5 314 L1169.5 321.3 L1161.5 328.6" fill="none" stroke="#444" stroke-width="1.4" />
<path d="M1161.5 386 L1169.5 393.3 L1161.5 400.6" fill="none" stroke="#444" stroke-width="1.4" />
<path d="M1161.5 457.9 L1169.5 465.2 L1161.5 472.5" fill="none" stroke="#444" stroke-width="1.4" />
<path d="M1161.5 563.2 L1169.5 569.5 L1161.5 575.8" fill="none" stroke="#444" stroke-width="1.4" />
<text transform="translate(948.62,533.90) scale(0.9222,1)" font-size="18.30" font-weight="normal" fill="#323130" >New Rule...</text>
<line x1="950" y1="535.6" x2="959.5" y2="535.6" stroke="#323130" stroke-width="1" />
<text transform="translate(949.17,577.80) scale(0.8967,1)" font-size="18.30" font-weight="normal" fill="#323130" >Clear Rules</text>
<line x1="950" y1="579.5" x2="959" y2="579.5" stroke="#323130" stroke-width="1" />
<text transform="translate(948.60,621.80) scale(0.9302,1)" font-size="18.30" font-weight="normal" fill="#323130" >Manage Rules...</text>
<line x1="1018" y1="623.5" x2="1027" y2="623.5" stroke="#323130" stroke-width="1" />
<rect x="918.5" y="158" width="41.0" height="32" fill="#f8f8f8" stroke="#4a4a4a" stroke-width="1.5"/>
<line x1="929.8" y1="158" x2="929.8" y2="190" stroke="#4a4a4a" stroke-width="1.2" />
<line x1="948.8" y1="158" x2="948.8" y2="190" stroke="#4a4a4a" stroke-width="1.2" />
<line x1="918.5" y1="168.8" x2="959.5" y2="168.8" stroke="#4a4a4a" stroke-width="1.2" />
<line x1="918.5" y1="179.4" x2="959.5" y2="179.4" stroke="#4a4a4a" stroke-width="1.2" />
<rect x="929" y="168.5" width="20" height="11" fill="#fbd68a" stroke="#e07b00" stroke-width="1.6"/>
<rect x="936.5" y="177.5" width="26" height="20" fill="#fff" stroke="#4a4a4a" stroke-width="1.5"/>
<path d="M954.5 181 L945 185.5 L954.5 190 M945 193.5 H954.5" fill="none" stroke="#333" stroke-width="1.3" />
<rect x="918.5" y="229.5" width="41.0" height="33.0" fill="#f8f8f8" stroke="#4a4a4a" stroke-width="1.5"/>
<line x1="928.5" y1="229.5" x2="928.5" y2="262.5" stroke="#4a4a4a" stroke-width="1.2" />
<line x1="949" y1="229.5" x2="949" y2="262.5" stroke="#4a4a4a" stroke-width="1.2" />
<line x1="918.5" y1="240.5" x2="959.5" y2="240.5" stroke="#4a4a4a" stroke-width="1.2" />
<line x1="918.5" y1="251.5" x2="959.5" y2="251.5" stroke="#4a4a4a" stroke-width="1.2" />
<rect x="928.5" y="229.5" width="20.5" height="33" fill="#fbd68a" stroke="#e07b00" stroke-width="1.6"/>
<line x1="928.5" y1="240.5" x2="949" y2="240.5" stroke="#4a4a4a" stroke-width="1" />
<line x1="928.5" y1="251.5" x2="949" y2="251.5" stroke="#4a4a4a" stroke-width="1" />
<path d="M938.8 248 V233.5 M933.5 238.5 L938.8 233 L944 238.5" fill="none" stroke="#333" stroke-width="1.4" />
<rect x="936.5" y="249.5" width="26" height="20" fill="#fff" stroke="#4a4a4a" stroke-width="1.5"/>
<text transform="translate(940.24,265.50) scale(1.1413,1)" font-size="14.50" font-weight="normal" fill="#444" >10</text>
<rect x="918.5" y="305" width="41.0" height="32" fill="#f8f8f8" stroke="#4a4a4a" stroke-width="1.5"/>
<line x1="925.5" y1="305" x2="925.5" y2="337" stroke="#4a4a4a" stroke-width="1.2" />
<line x1="952" y1="305" x2="952" y2="337" stroke="#4a4a4a" stroke-width="1.2" />
<line x1="918.5" y1="315.5" x2="959.5" y2="315.5" stroke="#4a4a4a" stroke-width="1.2" />
<line x1="918.5" y1="326.5" x2="959.5" y2="326.5" stroke="#4a4a4a" stroke-width="1.2" />
<rect x="925.5" y="305" width="13" height="10.5" fill="#7ab8ec" stroke="#1e74c8" stroke-width="1.6"/>
<rect x="925.5" y="315.5" width="5" height="11" fill="#7ab8ec" stroke="#1e74c8" stroke-width="1.6"/>
<rect x="925.5" y="326.5" width="10" height="10.5" fill="#7ab8ec" stroke="#1e74c8" stroke-width="1.6"/>
<rect x="918.5" y="376.5" width="41.0" height="32.5" fill="#f8f8f8" stroke="#4a4a4a" stroke-width="1.5"/>
<line x1="925.5" y1="376.5" x2="925.5" y2="409" stroke="#4a4a4a" stroke-width="1.2" />
<line x1="952" y1="376.5" x2="952" y2="409" stroke="#4a4a4a" stroke-width="1.2" />
<line x1="918.5" y1="387.3" x2="959.5" y2="387.3" stroke="#4a4a4a" stroke-width="1.2" />
<line x1="918.5" y1="398.2" x2="959.5" y2="398.2" stroke="#4a4a4a" stroke-width="1.2" />
<rect x="925.5" y="376.5" width="26.5" height="10.8" fill="#7ab8ec" stroke="#1e74c8" stroke-width="1.4"/>
<rect x="925.5" y="387.3" width="26.5" height="10.9" fill="#fbd68a" stroke="#e07b00" stroke-width="1.4"/>
<rect x="925.5" y="398.2" width="26.5" height="10.8" fill="#f48a91" stroke="#d9303f" stroke-width="1.4"/>
<rect x="918.5" y="449" width="41.0" height="32" fill="#f8f8f8" stroke="#4a4a4a" stroke-width="1.5"/>
<line x1="925.6" y1="449" x2="925.6" y2="481" stroke="#4a4a4a" stroke-width="1.2" />
<line x1="954.9" y1="449" x2="954.9" y2="481" stroke="#4a4a4a" stroke-width="1.2" />
<line x1="918.5" y1="459.8" x2="959.5" y2="459.8" stroke="#4a4a4a" stroke-width="1.2" />
<line x1="918.5" y1="470.2" x2="959.5" y2="470.2" stroke="#4a4a4a" stroke-width="1.2" />
<circle cx="931" cy="454.5" r="2.3" fill="#2d8de0"/>
<line x1="942.5" y1="454.5" x2="950.5" y2="454.5" stroke="#555" stroke-width="1.4" />
<circle cx="931" cy="465" r="2.3" fill="#e5303c"/>
<line x1="942.5" y1="465" x2="950.5" y2="465" stroke="#555" stroke-width="1.4" />
<circle cx="931" cy="475.5" r="2.3" fill="#2d8de0"/>
<line x1="942.5" y1="475.5" x2="950.5" y2="475.5" stroke="#555" stroke-width="1.4" />
<rect x="912.5" y="516" width="22.799999999999955" height="20" fill="#f8f8f8" stroke="#4a4a4a" stroke-width="1.5"/>
<line x1="919.3" y1="516" x2="919.3" y2="536" stroke="#4a4a4a" stroke-width="1.1" />
<line x1="929.7" y1="516" x2="929.7" y2="536" stroke="#4a4a4a" stroke-width="1.1" />
<line x1="912.5" y1="521.7" x2="935.3" y2="521.7" stroke="#4a4a4a" stroke-width="1.1" />
<line x1="912.5" y1="530.4" x2="935.3" y2="530.4" stroke="#4a4a4a" stroke-width="1.1" />
<rect x="919.3" y="521.7" width="10.400000000000091" height="8.699999999999932" fill="#fbd68a" stroke="#e07b00" stroke-width="1.6"/>
<rect x="912.5" y="560" width="22.799999999999955" height="20.200000000000045" fill="#f8f8f8" stroke="#4a4a4a" stroke-width="1.5"/>
<line x1="919.3" y1="560" x2="919.3" y2="580.2" stroke="#4a4a4a" stroke-width="1.1" />
<line x1="929.7" y1="560" x2="929.7" y2="580.2" stroke="#4a4a4a" stroke-width="1.1" />
<line x1="912.5" y1="565.5" x2="935.3" y2="565.5" stroke="#4a4a4a" stroke-width="1.1" />
<line x1="912.5" y1="574.5" x2="935.3" y2="574.5" stroke="#4a4a4a" stroke-width="1.1" />
<rect x="919.3" y="565.5" width="10.400000000000091" height="9.0" fill="#fbd68a" stroke="#e07b00" stroke-width="1.6"/>
<path d="M920.3 576.5 L932.6 564.3 L937.8 571.8 L926.2 583.2 Z" fill="#fff" stroke="none" stroke-width="1" />
<path d="M921.8 576.3 L932.4 566.2 L936 571.8 L926.2 581.2 Z" fill="#fff" stroke="#9b30b8" stroke-width="1.6" stroke-linejoin="round"/>
<path d="M921.8 576.3 L924.5 573.7 L928.8 578.6 L926.2 581.2 Z" fill="#c77fdb" stroke="#9b30b8" stroke-width="1.3" />
<rect x="915.5" y="605" width="20" height="19.5" fill="#f8f8f8" stroke="#4a4a4a" stroke-width="1.5"/>
<line x1="921.6" y1="605" x2="921.6" y2="624.5" stroke="#4a4a4a" stroke-width="1.1" />
<line x1="929.8" y1="605" x2="929.8" y2="624.5" stroke="#4a4a4a" stroke-width="1.1" />
<line x1="915.5" y1="611.3" x2="935.5" y2="611.3" stroke="#4a4a4a" stroke-width="1.1" />
<line x1="915.5" y1="618.2" x2="935.5" y2="618.2" stroke="#4a4a4a" stroke-width="1.1" />
<rect x="921.6" y="611.3" width="8.2" height="6.9" fill="#fbd68a" stroke="#e07b00" stroke-width="1.6"/>
<path d="M912.3 621.5 V602.5 H932.6" fill="none" stroke="#4a4a4a" stroke-width="1.4" />
<rect x="1184" y="402" width="261" height="617" fill="#000" opacity="0.16" filter="url(#msh)"/>
<rect x="1183" y="401.5" width="258" height="614" fill="#ffffff" stroke="#c8c6c4" stroke-width="1"/>
<text transform="translate(1202.28,429.80) scale(1.0440,1)" font-size="17.50" font-weight="bold" fill="#1a1a1a" >Directional</text>
<text transform="translate(1203.01,599.70) scale(0.9750,1)" font-size="17.50" font-weight="bold" fill="#1a1a1a" >Shapes</text>
<text transform="translate(1202.30,741.70) scale(1.0289,1)" font-size="17.50" font-weight="bold" fill="#1a1a1a" >Indicators</text>
<text transform="translate(1202.32,855.80) scale(1.0067,1)" font-size="17.50" font-weight="bold" fill="#1a1a1a" >Ratings</text>
<line x1="1184" y1="570.5" x2="1440" y2="570.5" stroke="#e1dfdd" stroke-width="1" />
<line x1="1184" y1="712.5" x2="1440" y2="712.5" stroke="#e1dfdd" stroke-width="1" />
<line x1="1184" y1="826.5" x2="1440" y2="826.5" stroke="#e1dfdd" stroke-width="1" />
<line x1="1184" y1="968.5" x2="1440" y2="968.5" stroke="#e1dfdd" stroke-width="1" />
<text transform="translate(1238.18,998.80) scale(0.9437,1)" font-size="18.30" font-weight="normal" fill="#323130" >More Rules...</text>
<line x1="1239.5" y1="1000.5" x2="1254" y2="1000.5" stroke="#323130" stroke-width="1" />
<rect x="1184.5" y="529" width="127.5" height="27.5" fill="#e1dfdd" />
<path d="M1199.50,450.00 L1206.75,455.90 L1206.75,462.20 L1201.90,457.40 L1201.90,467.60 L1197.10,467.60 L1197.10,457.40 L1192.25,462.20 L1192.25,455.90 Z" fill="#67a38d" stroke="#3c7a63" stroke-width="0.9" />
<path d="M1215.25,456.50 L1225.80,456.50 L1220.45,451.65 L1226.60,451.65 L1232.75,458.80 L1226.60,465.95 L1220.45,465.95 L1225.80,461.10 L1215.25,461.10 Z" fill="#ebc27f" stroke="#a9852f" stroke-width="0.9" />
<path d="M1248.00,467.60 L1255.25,461.70 L1255.25,455.40 L1250.40,460.20 L1250.40,450.00 L1245.60,450.00 L1245.60,460.20 L1240.75,455.40 L1240.75,461.70 Z" fill="#d85634" stroke="#b3452a" stroke-width="0.9" />
<path d="M1327.60,450.00 L1334.85,455.90 L1334.85,462.20 L1330.00,457.40 L1330.00,467.60 L1325.20,467.60 L1325.20,457.40 L1320.35,462.20 L1320.35,455.90 Z" fill="#7c7c7c" stroke="#6a6a6a" stroke-width="0.9" />
<path d="M1343.05,456.50 L1353.60,456.50 L1348.25,451.65 L1354.40,451.65 L1360.55,458.80 L1354.40,465.95 L1348.25,465.95 L1353.60,461.10 L1343.05,461.10 Z" fill="#7c7c7c" stroke="#6a6a6a" stroke-width="0.9" />
<path d="M1375.60,467.60 L1382.85,461.70 L1382.85,455.40 L1378.00,460.20 L1378.00,450.00 L1373.20,450.00 L1373.20,460.20 L1368.35,455.40 L1368.35,461.70 Z" fill="#7c7c7c" stroke="#6a6a6a" stroke-width="0.9" />
<path d="M1191 491.8 L1199.8 481 L1208.7 491.8 Z" fill="#67a38d" stroke="#3c7a63" stroke-width="0.9" />
<rect x="1215" y="483.3" width="17.8" height="6.5" fill="#ebc27f" stroke="#a9852f" stroke-width="0.9"/>
<path d="M1239 482.3 L1247.9 492.8 L1256.8 482.3 Z" fill="#d85634" stroke="#b3452a" stroke-width="0.9" />
<path d="M1327.60,477.70 L1334.85,483.60 L1334.85,489.90 L1330.00,485.10 L1330.00,495.30 L1325.20,495.30 L1325.20,485.10 L1320.35,489.90 L1320.35,483.60 Z" fill="#7c7c7c" stroke="#6a6a6a" stroke-width="0.9" />
<path d="M1344.20,483.00 L1349.10,478.70 L1359.50,478.70 L1359.50,489.10 L1355.10,493.50 L1355.10,485.60 L1347.20,494.30 L1343.90,491.00 L1352.60,482.80 Z" fill="#7c7c7c" stroke="#6a6a6a" stroke-width="0.9" />
<path d="M1368.00,490.00 L1372.90,494.30 L1383.30,494.30 L1383.30,483.90 L1378.90,479.50 L1378.90,487.40 L1371.00,478.70 L1367.70,482.00 L1376.40,490.20 Z" fill="#7c7c7c" stroke="#6a6a6a" stroke-width="0.9" />
<path d="M1399.70,495.30 L1406.95,489.40 L1406.95,483.10 L1402.10,487.90 L1402.10,477.70 L1397.30,477.70 L1397.30,487.90 L1392.45,483.10 L1392.45,489.40 Z" fill="#7c7c7c" stroke="#6a6a6a" stroke-width="0.9" />
<path d="M1199.50,506.00 L1206.75,511.90 L1206.75,518.20 L1201.90,513.40 L1201.90,523.60 L1197.10,523.60 L1197.10,513.40 L1192.25,518.20 L1192.25,511.90 Z" fill="#67a38d" stroke="#3c7a63" stroke-width="0.9" />
<path d="M1216.40,511.30 L1221.30,507.00 L1231.70,507.00 L1231.70,517.40 L1227.30,521.80 L1227.30,513.90 L1219.40,522.60 L1216.10,519.30 L1224.80,511.10 Z" fill="#ebc27f" stroke="#a9852f" stroke-width="0.9" />
<path d="M1240.40,518.30 L1245.30,522.60 L1255.70,522.60 L1255.70,512.20 L1251.30,507.80 L1251.30,515.70 L1243.40,507.00 L1240.10,510.30 L1248.80,518.50 Z" fill="#ebc27f" stroke="#a9852f" stroke-width="0.9" />
<path d="M1272.00,523.60 L1279.25,517.70 L1279.25,511.40 L1274.40,516.20 L1274.40,506.00 L1269.60,506.00 L1269.60,516.20 L1264.75,511.40 L1264.75,517.70 Z" fill="#d85634" stroke="#b3452a" stroke-width="0.9" />
<path d="M1327.60,506.00 L1334.85,511.90 L1334.85,518.20 L1330.00,513.40 L1330.00,523.60 L1325.20,523.60 L1325.20,513.40 L1320.35,518.20 L1320.35,511.90 Z" fill="#7c7c7c" stroke="#6a6a6a" stroke-width="0.9" />
<path d="M1344.20,511.30 L1349.10,507.00 L1359.50,507.00 L1359.50,517.40 L1355.10,521.80 L1355.10,513.90 L1347.20,522.60 L1343.90,519.30 L1352.60,511.10 Z" fill="#7c7c7c" stroke="#6a6a6a" stroke-width="0.9" />
<path d="M1366.85,512.50 L1377.40,512.50 L1372.05,507.65 L1378.20,507.65 L1384.35,514.80 L1378.20,521.95 L1372.05,521.95 L1377.40,517.10 L1366.85,517.10 Z" fill="#7c7c7c" stroke="#6a6a6a" stroke-width="0.9" />
<path d="M1392.10,518.30 L1397.00,522.60 L1407.40,522.60 L1407.40,512.20 L1403.00,507.80 L1403.00,515.70 L1395.10,507.00 L1391.80,510.30 L1400.50,518.50 Z" fill="#7c7c7c" stroke="#6a6a6a" stroke-width="0.9" />
<path d="M1423.60,523.60 L1430.85,517.70 L1430.85,511.40 L1426.00,516.20 L1426.00,506.00 L1421.20,506.00 L1421.20,516.20 L1416.35,511.40 L1416.35,517.70 Z" fill="#7c7c7c" stroke="#6a6a6a" stroke-width="0.9" />
<path d="M1199.50,534.00 L1206.75,539.90 L1206.75,546.20 L1201.90,541.40 L1201.90,551.60 L1197.10,551.60 L1197.10,541.40 L1192.25,546.20 L1192.25,539.90 Z" fill="#67a38d" stroke="#3c7a63" stroke-width="0.9" />
<path d="M1216.40,539.30 L1221.30,535.00 L1231.70,535.00 L1231.70,545.40 L1227.30,549.80 L1227.30,541.90 L1219.40,550.60 L1216.10,547.30 L1224.80,539.10 Z" fill="#ebc27f" stroke="#a9852f" stroke-width="0.9" />
<path d="M1239.25,540.50 L1249.80,540.50 L1244.45,535.65 L1250.60,535.65 L1256.75,542.80 L1250.60,549.95 L1244.45,549.95 L1249.80,545.10 L1239.25,545.10 Z" fill="#ebc27f" stroke="#a9852f" stroke-width="0.9" />
<path d="M1264.40,546.30 L1269.30,550.60 L1279.70,550.60 L1279.70,540.20 L1275.30,535.80 L1275.30,543.70 L1267.40,535.00 L1264.10,538.30 L1272.80,546.50 Z" fill="#ebc27f" stroke="#a9852f" stroke-width="0.9" />
<path d="M1296.00,551.60 L1303.25,545.70 L1303.25,539.40 L1298.40,544.20 L1298.40,534.00 L1293.60,534.00 L1293.60,544.20 L1288.75,539.40 L1288.75,545.70 Z" fill="#d85634" stroke="#b3452a" stroke-width="0.9" />
<circle cx="1200" cy="629" r="8.9" fill="#67a38d" stroke="#3c7a63" stroke-width="0.9"/>
<circle cx="1224.3" cy="629" r="8.9" fill="#ebc27f" stroke="#a9852f" stroke-width="0.9"/>
<circle cx="1248" cy="629" r="8.9" fill="#d85634" stroke="#b3452a" stroke-width="0.9"/>
<rect x="1319.1" y="620.1" width="17.8" height="17.8" fill="#4d4d4d" stroke="#333" stroke-width="0.9" rx="1.8"/>
<circle cx="1328" cy="629" r="6" fill="#67a38d"/>
<rect x="1343.1" y="620.1" width="17.8" height="17.8" fill="#4d4d4d" stroke="#333" stroke-width="0.9" rx="1.8"/>
<circle cx="1352" cy="629" r="6" fill="#ebc27f"/>
<rect x="1366.8999999999999" y="620.1" width="17.8" height="17.8" fill="#4d4d4d" stroke="#333" stroke-width="0.9" rx="1.8"/>
<circle cx="1375.8" cy="629" r="6" fill="#d85634"/>
<circle cx="1200" cy="657" r="8.9" fill="#67a38d" stroke="#3c7a63" stroke-width="0.9"/>
<path d="M1224.3 648.5 L1233 664.7 H1215.6 Z" fill="#ebc27f" stroke="#a9852f" stroke-width="0.9" stroke-linejoin="round"/>
<path d="M1248 648.3 L1256.7 657 L1248 665.7 L1239.3 657 Z" fill="#d85634" stroke="#b3452a" stroke-width="0.9" stroke-linejoin="round"/>
<circle cx="1328" cy="657" r="8.9" fill="#67a38d" stroke="#3c7a63" stroke-width="0.9"/>
<circle cx="1352" cy="657" r="8.9" fill="#ebc27f" stroke="#a9852f" stroke-width="0.9"/>
<circle cx="1375.8" cy="657" r="8.9" fill="#d85634" stroke="#b3452a" stroke-width="0.9"/>
<circle cx="1399.9" cy="657" r="8.9" fill="#4d4d4d" stroke="#3a3a3a" stroke-width="0.9"/>
<circle cx="1200" cy="685" r="8.9" fill="#d85634" stroke="#b3452a" stroke-width="0.9"/>
<circle cx="1224.3" cy="685" r="8.9" fill="#eeb0a6" stroke="#b88a82" stroke-width="0.9"/>
<circle cx="1248" cy="685" r="8.9" fill="#b2b2b2" stroke="#8a8a8a" stroke-width="0.9"/>
<circle cx="1272.1" cy="685" r="8.9" fill="#4d4d4d" stroke="#3a3a3a" stroke-width="0.9"/>
<circle cx="1200" cy="771" r="8.9" fill="#67a38d" stroke="#3c7a63" stroke-width="0.9"/>
<circle cx="1224.2" cy="771" r="8.9" fill="#ebc27f" stroke="#a9852f" stroke-width="0.9"/>
<circle cx="1248" cy="771" r="8.9" fill="#d85634" stroke="#b3452a" stroke-width="0.9"/>
<path d="M1195 771 L1198.5 774.5 L1205 767" fill="none" stroke="#fff" stroke-width="2.2" />
<rect x="1222.9" y="764.5" width="2.6" height="8" fill="#fff" />
<rect x="1222.9" y="775" width="2.6" height="2.6" fill="#fff" />
<path d="M1244.3 767.3 L1251.7 774.7 M1251.7 767.3 L1244.3 774.7" fill="none" stroke="#fff" stroke-width="2.2" />
<path d="M1319.5 770.5 L1322 768 L1326.3 772.5 L1335 763.7 L1337.3 766 L1326.3 777.7 Z" fill="#67a38d" stroke="#3c7a63" stroke-width="0.8" />
<path d="M1349.5 761.5 H1354.5 L1353.6 774.5 H1350.4 Z" fill="#ebc27f" stroke="#a9852f" stroke-width="0.8" />
<circle cx="1352" cy="777.5" r="2" fill="#ebc27f" stroke="#a9852f" stroke-width="0.8"/>
<path d="M1368 766 L1370.3 763.7 L1376.2 769.6 L1382.1 763.7 L1384.4 766 L1378.5 771.9 L1384.4 777.8 L1382.1 780.1 L1376.2 774.2 L1370.3 780.1 L1368 777.8 L1373.9 771.9 Z" fill="#d85634" stroke="#b3452a" stroke-width="0.8" />
<rect x="1193.1" y="789.8" width="1.9" height="18" fill="#6e6e6e" />
<path d="M1195.9 790.5 L1206.7 795.6 L1195.9 800.7 Z" fill="#67a38d" stroke="#3c7a63" stroke-width="0.6" />
<rect x="1217.1" y="789.8" width="1.9" height="18" fill="#6e6e6e" />
<path d="M1219.9 790.5 L1230.7 795.6 L1219.9 800.7 Z" fill="#ebc27f" stroke="#a9852f" stroke-width="0.6" />
<rect x="1241.1" y="789.8" width="1.9" height="18" fill="#6e6e6e" />
<path d="M1243.9 790.5 L1254.7 795.6 L1243.9 800.7 Z" fill="#d85634" stroke="#b3452a" stroke-width="0.6" />
<path d="M1200.00,876.60 L1202.29,882.64 L1208.75,882.96 L1203.71,887.01 L1205.41,893.24 L1200.00,889.70 L1194.59,893.24 L1196.29,887.01 L1191.25,882.96 L1197.71,882.64 Z" fill="#ebc27f" stroke="#a9852f" stroke-width="0.9" />
<clipPath id="hs1224"><rect x="1214" y="875" width="10" height="20"/></clipPath>
<path d="M1224.00,876.60 L1226.29,882.64 L1232.75,882.96 L1227.71,887.01 L1229.41,893.24 L1224.00,889.70 L1218.59,893.24 L1220.29,887.01 L1215.25,882.96 L1221.71,882.64 Z" fill="#fff" stroke="#7a7a7a" stroke-width="0.9" />
<path d="M1224.00,876.60 L1226.29,882.64 L1232.75,882.96 L1227.71,887.01 L1229.41,893.24 L1224.00,889.70 L1218.59,893.24 L1220.29,887.01 L1215.25,882.96 L1221.71,882.64 Z" fill="#ebc27f" stroke="#a9852f" stroke-width="0.9" clip-path="url(#hs1224)"/>
<path d="M1248.10,876.60 L1250.39,882.64 L1256.85,882.96 L1251.81,887.01 L1253.51,893.24 L1248.10,889.70 L1242.69,893.24 L1244.39,887.01 L1239.35,882.96 L1245.81,882.64 Z" fill="#fff" stroke="#7a7a7a" stroke-width="0.9" />
<circle cx="1200" cy="912.9" r="8.7" fill="#4d4d4d" stroke="#333" stroke-width="1.2"/>
<circle cx="1224" cy="912.9" r="8.7" fill="#fff" stroke="#333" stroke-width="1.2"/>
<path d="M1224 912.9 V904.1999999999999 A8.7 8.7 0 1 1 1215.3 912.9 Z" fill="#4d4d4d" stroke="none" stroke-width="1" />
<circle cx="1248.1" cy="912.9" r="8.7" fill="#fff" stroke="#333" stroke-width="1.2"/>
<path d="M1248.1 904.1999999999999 A8.7 8.7 0 0 0 1248.1 921.6 Z" fill="#4d4d4d" stroke="none" stroke-width="1" />
<circle cx="1271.9" cy="912.9" r="8.7" fill="#fff" stroke="#333" stroke-width="1.2"/>
<path d="M1271.9 912.9 V904.1999999999999 A8.7 8.7 0 0 1 1280.6000000000001 912.9 Z" fill="#4d4d4d" stroke="none" stroke-width="1" />
<circle cx="1295.9" cy="912.9" r="8.7" fill="#fff" stroke="#333" stroke-width="1.2"/>
<rect x="1190.6" y="931.5" width="8.700000000000001" height="8.700000000000001" fill="#4a7ab5" stroke="#2e5a90" stroke-width="0.9" rx="0.8"/>
<rect x="1199.9" y="931.5" width="8.700000000000001" height="8.700000000000001" fill="#4a7ab5" stroke="#2e5a90" stroke-width="0.9" rx="0.8"/>
<rect x="1190.6" y="940.8" width="8.700000000000001" height="8.700000000000001" fill="#4a7ab5" stroke="#2e5a90" stroke-width="0.9" rx="0.8"/>
<rect x="1199.9" y="940.8" width="8.700000000000001" height="8.700000000000001" fill="#4a7ab5" stroke="#2e5a90" stroke-width="0.9" rx="0.8"/>
<rect x="1214.5" y="931.5" width="8.700000000000001" height="8.700000000000001" fill="#4a7ab5" stroke="#2e5a90" stroke-width="0.9" rx="0.8"/>
<rect x="1223.8" y="931.5" width="8.700000000000001" height="8.700000000000001" fill="#bdbdbd" stroke="#8a8a8a" stroke-width="0.9" rx="0.8"/>
<rect x="1214.5" y="940.8" width="8.700000000000001" height="8.700000000000001" fill="#4a7ab5" stroke="#2e5a90" stroke-width="0.9" rx="0.8"/>
<rect x="1223.8" y="940.8" width="8.700000000000001" height="8.700000000000001" fill="#4a7ab5" stroke="#2e5a90" stroke-width="0.9" rx="0.8"/>
<rect x="1238.5" y="931.5" width="8.700000000000001" height="8.700000000000001" fill="#bdbdbd" stroke="#8a8a8a" stroke-width="0.9" rx="0.8"/>
<rect x="1247.8" y="931.5" width="8.700000000000001" height="8.700000000000001" fill="#bdbdbd" stroke="#8a8a8a" stroke-width="0.9" rx="0.8"/>
<rect x="1238.5" y="940.8" width="8.700000000000001" height="8.700000000000001" fill="#4a7ab5" stroke="#2e5a90" stroke-width="0.9" rx="0.8"/>
<rect x="1247.8" y="940.8" width="8.700000000000001" height="8.700000000000001" fill="#4a7ab5" stroke="#2e5a90" stroke-width="0.9" rx="0.8"/>
<rect x="1262.4" y="931.5" width="8.700000000000001" height="8.700000000000001" fill="#bdbdbd" stroke="#8a8a8a" stroke-width="0.9" rx="0.8"/>
<rect x="1271.7" y="931.5" width="8.700000000000001" height="8.700000000000001" fill="#bdbdbd" stroke="#8a8a8a" stroke-width="0.9" rx="0.8"/>
<rect x="1262.4" y="940.8" width="8.700000000000001" height="8.700000000000001" fill="#4a7ab5" stroke="#2e5a90" stroke-width="0.9" rx="0.8"/>
<rect x="1271.7" y="940.8" width="8.700000000000001" height="8.700000000000001" fill="#bdbdbd" stroke="#8a8a8a" stroke-width="0.9" rx="0.8"/>
<rect x="1286.5" y="931.5" width="8.700000000000001" height="8.700000000000001" fill="#bdbdbd" stroke="#8a8a8a" stroke-width="0.9" rx="0.8"/>
<rect x="1295.8" y="931.5" width="8.700000000000001" height="8.700000000000001" fill="#bdbdbd" stroke="#8a8a8a" stroke-width="0.9" rx="0.8"/>
<rect x="1286.5" y="940.8" width="8.700000000000001" height="8.700000000000001" fill="#bdbdbd" stroke="#8a8a8a" stroke-width="0.9" rx="0.8"/>
<rect x="1295.8" y="940.8" width="8.700000000000001" height="8.700000000000001" fill="#bdbdbd" stroke="#8a8a8a" stroke-width="0.9" rx="0.8"/>
<rect x="1319.2" y="886.1" width="4.2" height="7.7" fill="#4a7ab5" stroke="#2e5a90" stroke-width="0.8"/>
<rect x="1323.4" y="882.6" width="4.2" height="11.2" fill="#bdbdbd" stroke="#8a8a8a" stroke-width="0.8"/>
<rect x="1327.6" y="879.3" width="4.2" height="14.5" fill="#bdbdbd" stroke="#8a8a8a" stroke-width="0.8"/>
<rect x="1331.8" y="876.1" width="4.2" height="17.7" fill="#bdbdbd" stroke="#8a8a8a" stroke-width="0.8"/>
<rect x="1343.4" y="886.1" width="4.2" height="7.7" fill="#4a7ab5" stroke="#2e5a90" stroke-width="0.8"/>
<rect x="1347.6" y="882.6" width="4.2" height="11.2" fill="#4a7ab5" stroke="#2e5a90" stroke-width="0.8"/>
<rect x="1351.8" y="879.3" width="4.2" height="14.5" fill="#bdbdbd" stroke="#8a8a8a" stroke-width="0.8"/>
<rect x="1356.0" y="876.1" width="4.2" height="17.7" fill="#bdbdbd" stroke="#8a8a8a" stroke-width="0.8"/>
<rect x="1367.2" y="886.1" width="4.2" height="7.7" fill="#4a7ab5" stroke="#2e5a90" stroke-width="0.8"/>
<rect x="1371.4" y="882.6" width="4.2" height="11.2" fill="#4a7ab5" stroke="#2e5a90" stroke-width="0.8"/>
<rect x="1375.6" y="879.3" width="4.2" height="14.5" fill="#4a7ab5" stroke="#2e5a90" stroke-width="0.8"/>
<rect x="1379.8" y="876.1" width="4.2" height="17.7" fill="#bdbdbd" stroke="#8a8a8a" stroke-width="0.8"/>
<rect x="1391.3" y="886.1" width="4.2" height="7.7" fill="#4a7ab5" stroke="#2e5a90" stroke-width="0.8"/>
<rect x="1395.5" y="882.6" width="4.2" height="11.2" fill="#4a7ab5" stroke="#2e5a90" stroke-width="0.8"/>
<rect x="1399.7" y="879.3" width="4.2" height="14.5" fill="#4a7ab5" stroke="#2e5a90" stroke-width="0.8"/>
<rect x="1403.9" y="876.1" width="4.2" height="17.7" fill="#4a7ab5" stroke="#2e5a90" stroke-width="0.8"/>
<rect x="1319.2" y="914.0" width="4.2" height="7.7" fill="#bdbdbd" stroke="#8a8a8a" stroke-width="0.8"/>
<rect x="1323.4" y="910.5" width="4.2" height="11.2" fill="#bdbdbd" stroke="#8a8a8a" stroke-width="0.8"/>
<rect x="1327.6" y="907.2" width="4.2" height="14.5" fill="#bdbdbd" stroke="#8a8a8a" stroke-width="0.8"/>
<rect x="1331.8" y="904.0" width="4.2" height="17.7" fill="#bdbdbd" stroke="#8a8a8a" stroke-width="0.8"/>
<rect x="1343.4" y="914.0" width="4.2" height="7.7" fill="#4a7ab5" stroke="#2e5a90" stroke-width="0.8"/>
<rect x="1347.6" y="910.5" width="4.2" height="11.2" fill="#bdbdbd" stroke="#8a8a8a" stroke-width="0.8"/>
<rect x="1351.8" y="907.2" width="4.2" height="14.5" fill="#bdbdbd" stroke="#8a8a8a" stroke-width="0.8"/>
<rect x="1356.0" y="904.0" width="4.2" height="17.7" fill="#bdbdbd" stroke="#8a8a8a" stroke-width="0.8"/>
<rect x="1367.2" y="914.0" width="4.2" height="7.7" fill="#4a7ab5" stroke="#2e5a90" stroke-width="0.8"/>
<rect x="1371.4" y="910.5" width="4.2" height="11.2" fill="#4a7ab5" stroke="#2e5a90" stroke-width="0.8"/>
<rect x="1375.6" y="907.2" width="4.2" height="14.5" fill="#bdbdbd" stroke="#8a8a8a" stroke-width="0.8"/>
<rect x="1379.8" y="904.0" width="4.2" height="17.7" fill="#bdbdbd" stroke="#8a8a8a" stroke-width="0.8"/>
<rect x="1391.3" y="914.0" width="4.2" height="7.7" fill="#4a7ab5" stroke="#2e5a90" stroke-width="0.8"/>
<rect x="1395.5" y="910.5" width="4.2" height="11.2" fill="#4a7ab5" stroke="#2e5a90" stroke-width="0.8"/>
<rect x="1399.7" y="907.2" width="4.2" height="14.5" fill="#4a7ab5" stroke="#2e5a90" stroke-width="0.8"/>
<rect x="1403.9" y="904.0" width="4.2" height="17.7" fill="#bdbdbd" stroke="#8a8a8a" stroke-width="0.8"/>
<rect x="1415.2" y="914.0" width="4.2" height="7.7" fill="#4a7ab5" stroke="#2e5a90" stroke-width="0.8"/>
<rect x="1419.4" y="910.5" width="4.2" height="11.2" fill="#4a7ab5" stroke="#2e5a90" stroke-width="0.8"/>
<rect x="1423.6" y="907.2" width="4.2" height="14.5" fill="#4a7ab5" stroke="#2e5a90" stroke-width="0.8"/>
<rect x="1427.8" y="904.0" width="4.2" height="17.7" fill="#4a7ab5" stroke="#2e5a90" stroke-width="0.8"/>
<path d="M1306.5 551.5 V574.5 L1311.5 569.5 L1315 577.5 L1318.5 576 L1315 568.5 L1322 568.5 Z" fill="#fff" stroke="#111" stroke-width="1" />
<g stroke="#000" stroke-width="4.6" fill="none" stroke-linecap="butt" stroke-linejoin="miter">
<polyline points="600,625 878.5,812.5 1180,574"/>
</g>
<path d="M582.9 612.6 L613 620 L600 638 Z" fill="#000" stroke="none" stroke-width="1" />
<path d="M1197.8 561 L1185 590 L1170 571 Z" fill="#000" stroke="none" stroke-width="1" />
<text transform="translate(700.82,856.20) scale(1.0517,1)" font-size="36.50" font-weight="bold" fill="#000" >5</text>
<rect x="731.9" y="843.2" width="14.4" height="4.2" fill="#000" />
<text transform="translate(754.18,856.20) scale(1.0158,1)" font-size="36.50" font-weight="bold" fill="#000" >Arrows</text>
<text transform="translate(888.08,856.20) scale(1.0570,1)" font-size="36.50" font-weight="bold" fill="#000" >(Colored)</text>
</svg></body></html>
